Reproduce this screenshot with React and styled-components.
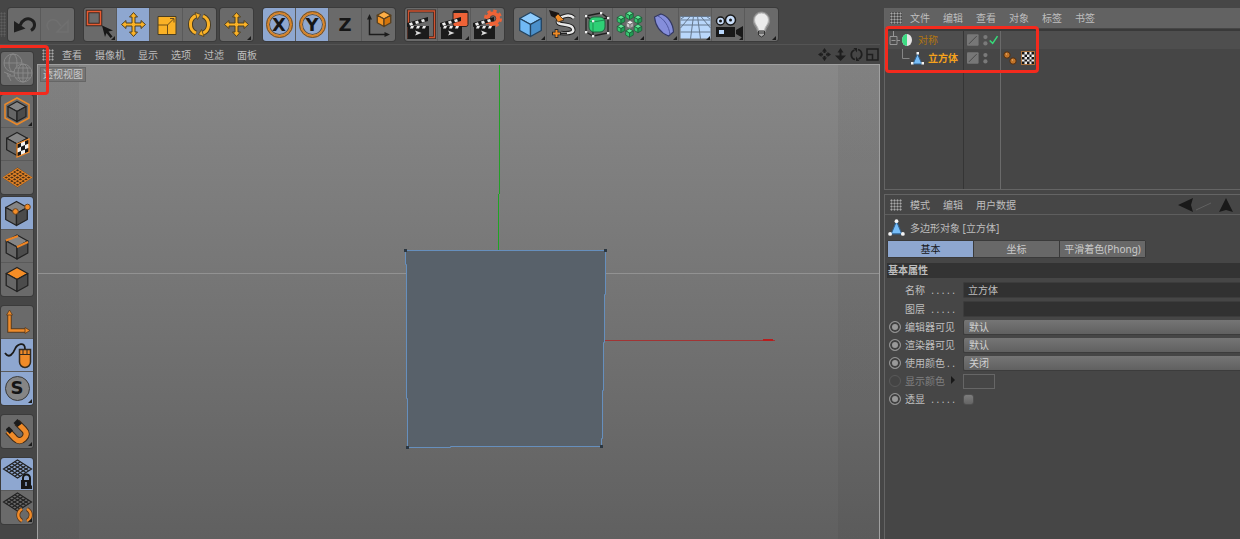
import React, { useState } from 'react';
import styled, { createGlobalStyle } from 'styled-components';

const GlobalStyle = createGlobalStyle`
  * {
    box-sizing: border-box;
  }

  body {
    margin: 0;
    background: #464646;
    color: #bebebe;
    font: 10px/14px 'Noto Sans', 'Noto Sans CJK SC', sans-serif;
  }

  button, input, select {
    font: inherit;
    color: inherit;
  }

  svg {
    display: block;
  }
`;

const Page = styled.div`
  position: relative;
  display: flex;
  gap: 4px;
  min-height: 100vh;
  background: #464646;
`;

const Main = styled.main`
  flex: 1;
  min-width: 0;
  display: flex;
  flex-direction: column;
`;

const Toolbar = styled.header`
  display: flex;
  gap: 10px;
  height: 45px;
  padding-top: 8px;
  border-bottom: 1px solid #545454;
`;

const ToolGroup = styled.div`
  display: flex;
  flex-direction: ${props => props.$vertical ? 'column' : 'row'};
  height: ${props => props.$vertical ? 'auto' : '33px'};
  margin-left: ${props => props.$close && !props.$vertical ? '-6px' : '0'};
  margin-top: ${props => props.$close && props.$vertical ? '-7px' : '0'};
  border-radius: 3px;
  overflow: hidden;
  box-shadow: 0 0 0 1px #3b3b3b;
`;

const ToolButton = styled.button`
  position: relative;
  display: flex;
  align-items: center;
  justify-content: center;
  width: ${props => props.$vertical ? '32px' : '33px'};
  height: 33px;
  padding: 0;
  border: 0;
  border-right: ${props => props.$vertical ? '0' : '1px solid #5a5a5a'};
  border-bottom: ${props => props.$vertical ? '1px solid #5a5a5a' : '0'};
  background: ${props => props.$active ? '#8ea7d0' : '#6a6a6a'};
  cursor: pointer;

  &:last-child {
    border-color: transparent;
  }

  svg {
    flex: none;
    width: 33px;
    height: 33px;
  }
`;

const Corner = styled.span`
  position: absolute;
  right: 1px;
  bottom: 1px;
  border: 2px solid transparent;
  border-right-color: #1c1c1c;
  border-bottom-color: #1c1c1c;
`;

const AxisLetter = styled.span`
  display: flex;
  align-items: center;
  justify-content: center;
  width: 27px;
  height: 27px;
  border: 3px solid ${props => props.$ring ? '#d98427' : 'transparent'};
  border-radius: 50%;
  outline: ${props => props.$ring ? '1px solid #5d5140' : 'none'};
  outline-offset: -1px;
  box-shadow: ${props => props.$ring ? 'inset 0 0 0 1px #5d5140' : 'none'};
  color: #161616;
  font: bold 18px/18px 'DejaVu Sans', sans-serif;
`;

const Workspace = styled.div`
  flex: 1;
  display: flex;
`;

const Sidebar = styled.nav`
  display: flex;
  flex-direction: column;
  gap: 10px;
  width: 37px;
  padding: 7px 4px 0 1px;
`;

const ViewColumn = styled.section`
  flex: 1;
  min-width: 0;
  display: flex;
  flex-direction: column;
`;

const MenuBar = styled.div`
  display: flex;
  align-items: center;
  gap: 13px;
  height: ${props => props.$raised ? '20px' : '19px'};
  padding: 0 8px 0 5px;
  background: ${props => props.$raised ? '#626262' : '#464646'};
`;

const MenuItem = styled.button`
  padding: 0;
  border: 0;
  background: none;
  white-space: nowrap;
  cursor: pointer;
`;

const Grip = styled.span`
  width: 12px;
  height: 12px;
  margin-right: -5px;
  background: radial-gradient(circle, #a8a8a8 30%, #2e2e2e 80%) 0 0 / 3px 3px;
`;

const ToolbarGrip = styled(Grip)`
  width: 6px;
  height: 25px;
  margin: 4px -8px 0 0;
  opacity: 0.25;
`;

const MenuTools = styled.div`
  display: flex;
  gap: 3px;
  margin-left: auto;
  margin-right: -7px;
`;

const View = styled.div`
  position: relative;
  flex: 1;
  display: flex;
  flex-direction: column;
  border: 1px solid #a0a0a0;
  border-width: 1px 1px 0 1px;
  background:
    linear-gradient(90deg, rgba(0, 0, 0, 0.05) 41px, transparent 41px calc(100% - 41px), rgba(0, 0, 0, 0.05) calc(100% - 41px)),
    linear-gradient(#888, #606060);
`;

const ViewTitle = styled.span`
  position: absolute;
  top: 2px;
  left: 2px;
  padding: 0 2px;
  border: 1px solid #666;
  background: #757575;
  color: #c8c8c8;
  line-height: 13px;
`;

const Scene = styled.svg`
  flex: 1 1 0;
  width: 100%;
  min-height: 0;
`;

const SidePanels = styled.aside`
  display: flex;
  flex-direction: column;
  width: 356px;
  padding-top: 8px;
`;

const ObjectManager = styled.section`
  display: flex;
  flex-direction: column;
  height: 182px;
  border: 1px solid #646464;
  border-width: 0 0 1px 1px;
`;

const Tree = styled.div`
  flex: 1;
  display: grid;
  grid-template-columns: 79px 37px 1fr;
  margin-top: 1px;
  border-top: 2px solid #393939;
`;

const TreeColumn = styled.div`
  border-right: 1px solid ${props => props.$light ? '#6a6a6a' : '#353535'};

  &:last-child {
    border: 0;
  }
`;

const TreeCell = styled.div`
  display: flex;
  align-items: center;
  gap: 4px;
  height: 18px;
  padding-left: ${props => props.$indent || 3}px;
  background: ${props => props.$even ? '#4e4e4e' : 'transparent'};
  color: ${props => props.$bold ? '#f5a21c' : '#b4770f'};
  font-weight: ${props => props.$bold ? 'bold' : 'normal'};
  white-space: nowrap;
`;

const AttributeManager = styled.section`
  flex: 1;
  margin-top: 4px;
  border: 1px solid #646464;
  border-width: 1px 0 0 1px;
`;

const ObjectTitle = styled.h2`
  display: flex;
  align-items: center;
  gap: 5px;
  height: 26px;
  margin: 0;
  padding-left: 3px;
  border-top: 1px solid #5e5e5e;
  font-size: 10px;
  font-weight: normal;
`;

const Tabs = styled.div`
  display: flex;
  width: 259px;
  height: 18px;
  margin-left: 2px;
  border: 1px solid #3a3a3a;
  border-radius: 2px;
`;

const Tab = styled.button`
  flex: 1;
  padding: 0;
  border: 0;
  border-right: 1px solid #3a3a3a;
  background: ${props => props.$active ? '#8ea7d0' : '#686868'};
  color: ${props => props.$active ? '#161616' : '#cacaca'};
  line-height: 16px;
  white-space: nowrap;
  cursor: pointer;

  &:last-child {
    border: 0;
  }
`;

const SectionTitle = styled.h3`
  height: 15px;
  margin: 5px 0 2px 2px;
  padding-left: 1px;
  background: #333;
  font-size: 10px;
  font-weight: bold;
  line-height: 15px;
`;

const Row = styled.div`
  display: grid;
  grid-template-columns: 12px 50px 1fr;
  column-gap: 4px;
  align-items: center;
  height: ${props => props.$tall ? '19px' : '18px'};
  padding-left: 4px;
  color: ${props => props.$off ? '#808080' : 'inherit'};
`;

const KeyDot = styled.input`
  appearance: none;
  width: 12px;
  height: 12px;
  margin: 0;
  border: 1px solid #929292;
  border-radius: 50%;
  background: ${props => props.disabled ? '#404040' : '#999'};
  box-shadow: inset 0 0 0 2px #404040;
  opacity: ${props => props.disabled ? 0.25 : 1};
`;

const Label = styled.label`
  display: flex;
  justify-content: space-between;
  white-space: nowrap;
`;

const Field = styled.div`
  display: flex;
  min-width: 0;
  padding-left: 4px;
`;

const TextInput = styled.input`
  width: 100%;
  height: 16px;
  padding: 0 4px;
  border: 1px solid #3c3c3c;
  border-right: 0;
  border-radius: 2px 0 0 2px;
  background: #313131;
`;

const Select = styled.select`
  appearance: none;
  width: 100%;
  height: 15px;
  padding: 0 5px;
  border: 1px solid #3c3c3c;
  border-width: 0 0 1px 1px;
  border-radius: 2px 0 0 2px;
  background: linear-gradient(#757575, #606060);
  color: #d2d2d2;
`;

const Swatch = styled.button`
  width: 32px;
  height: 15px;
  border: 1px solid #666;
  background: #464646;
`;

const Check = styled.input`
  appearance: none;
  width: 11px;
  height: 11px;
  margin: 0;
  border: 1px solid #505050;
  border-radius: 3px;
  background: linear-gradient(#7c7c7c, #656565);
`;

const Highlight = styled.div`
  position: absolute;
  border: 3px solid #f42a1d;
  border-radius: 4px;
  pointer-events: none;
`;

const ToolHighlight = styled(Highlight)`
  top: 45px;
  left: -3px;
  width: 52px;
  height: 50px;
`;

const TreeHighlight = styled(Highlight)`
  top: 26px;
  right: 201px;
  width: 154px;
  height: 47px;
`;

const Icon = ({ size = 33, children }) => (
  <svg width={size} height={size} viewBox={`0 0 ${size} ${size}`} fill="none" aria-hidden="true">
    {children}
  </svg>
);

function Cube({ x = 16.5, y = 16.5, r = 12, top = '#858585', left = '#666', right = '#4b4b4b', line = '#232323' }) {
  const w = r * 0.9;
  const h = r * 0.5;
  return (
    <g stroke={line} strokeWidth={r > 6 ? 1.3 : 0.7} strokeLinejoin="round">
      <path d={`M${x} ${y - r}l${w} ${h}l${-w} ${h}l${-w} ${-h}z`} fill={top} />
      <path d={`M${x - w} ${y - r + h}l${w} ${h}V${y + r}l${-w} ${-h}z`} fill={left} />
      <path d={`M${x + w} ${y - r + h}l${-w} ${h}V${y + r}l${w} ${-h}z`} fill={right} />
    </g>
  );
}

const Clapper = () => (
  <g>
    <path d="M3 20h21v11h-21z" fill="#1b1b1b" />
    <path d="M2 15l21-6v4l-21 6z" fill="#181818" />
    <path d="M4 15.2l3-.9l1 2.6l-3 .8zM10 13.500l3-.9l1 2.600l-3 .8zM16 11.800l3-.9l1 2.600l-3 .8z" fill="#eee" />
    <path d="M3 18h21v3h-21z" fill="#181818" />
    <path d="M6 18h3l-1 2.500h-3zM12 18h3l-1 2.500h-3zM18 18h3l-1 2.500h-3z" fill="#eee" />
    <path d="M10 22.500l6.500 2.500-6.500 2.500 1.500-2.500z" fill="#ddd" />
  </g>
);

const MoveIcon = () => (
  <Icon>
    <path
      d="M16.500 4.500l4 4.500h-2.500v6h6v-2.500l4.500 4-4.500 4v-2.500h-6v6h2.500l-4 4.500-4-4.500h2.500v-6h-6v2.500l-4.500-4 4.500-4v2.500h6v-6h-2.500z"
      fill="#fbb226" stroke="#4b3e23" strokeLinejoin="round"
    />
  </Icon>
);

const Mesh = ({ y = 16, color, fill = 'none' }) => (
  <g stroke={color} strokeWidth="1.2">
    <path d={`M16.500 ${y - 9}l14 9-14 9-14-9z`} fill={fill} />
    {[1, 2, 3, 4].map(n => (
      <path
        key={n}
        d={`M${16.5 - 2.8 * n} ${y - 9 + 1.8 * n}l14 9M${16.5 + 2.8 * n} ${y - 9 + 1.8 * n}l-14 9`}
      />
    ))}
  </g>
);

const UndoIcon = () => (
  <Icon>
    <path d="M12 17.500C14 12 19 9.500 23 11.500C28 14 27.500 20 23 22.500" stroke="#1f1f1f" strokeWidth="3" />
    <path d="M6 13v11.500l11.500-4z" fill="#1f1f1f" />
  </Icon>
);

const RedoIcon = () => (
  <Icon>
    <path d="M8 22C3 16 9 9 16 13l4 5M27 13v11H16z" stroke="#707070" strokeWidth="1.500" />
  </Icon>
);

const SelectIcon = () => (
  <Icon>
    <path d="M3.500 3.500h13v13h-13z" fill="#6c6c6c" stroke="#3a2a25" strokeWidth="3.500" />
    <path d="M3.500 3.500h13v13h-13z" stroke="#e85b31" strokeWidth="1.500" />
    <path d="M18 17.500l11 5-4.500 1 4 5-2 1.500-4-5-1.500 4z" fill="#171717" />
  </Icon>
);

const ScaleIcon = () => (
  <Icon>
    <path d="M8 8.500h18v18h-18z" fill="#fbb226" stroke="#4b3e23" />
    <path d="M8 17h9.500v9.500M17.500 17l6-6M20 10.500h4v4" stroke="#5d4315" strokeWidth="0.900" />
  </Icon>
);

const RotateIcon = () => (
  <Icon>
    {['#4b3e23', '#fbb226'].map((color, i) => (
      <g key={color} stroke={color} strokeWidth={i ? 3 : 5}>
        <path d="M13 25A9.500 9.500 0 0 1 13.500 7.500" />
        <path d="M20 8A9.500 9.500 0 0 1 19.500 25.500" />
      </g>
    ))}
    <path d="M12 4.500l5.500 2-3 5zM21 28.500l-5.500-2 3-5z" fill="#fbb226" stroke="#4b3e23" strokeWidth="0.800" />
  </Icon>
);

const CoordIcon = () => (
  <Icon>
    <path d="M7.500 10v16.500h16" stroke="#1c1c1c" strokeWidth="1.500" />
    <path d="M7.500 6l2.500 5.500h-5zM28 26.500l-5.500-2.500v5z" fill="#1c1c1c" />
    <Cube x={22} y={11} r={7.5} top="#ffae45" left="#f49422" right="#d3740c" line="#59401f" />
  </Icon>
);

const RenderViewIcon = () => (
  <Icon>
    <path d="M3.500 3h26v26.500h-26z" stroke="#3a2a25" strokeWidth="3" />
    <path d="M3.500 3h26v26.500h-26z" stroke="#d2532f" strokeWidth="1.300" />
    <Clapper />
  </Icon>
);

const RenderPictureIcon = () => (
  <Icon>
    <rect x="15" y="2.500" width="15" height="16" rx="2" fill="#ef6337" stroke="#292220" />
    <path d="M15 5V3h15v2z" fill="#222" />
    <Clapper />
  </Icon>
);

const RenderSettingsIcon = () => (
  <Icon>
    <circle cx="22" cy="10.500" r="7.500" stroke="#ef6337" strokeWidth="3" strokeDasharray="3.300 2.590" />
    <circle cx="22" cy="10.500" r="5" stroke="#ef6337" strokeWidth="4" />
    <circle cx="22" cy="10.500" r="2.800" fill="#696969" stroke="#4a302a" strokeWidth="0.700" />
    <Clapper />
  </Icon>
);

const SplineIcon = () => (
  <Icon>
    {['#222', '#e8e8e8'].map((color, i) => (
      <path
        key={color}
        d="M27 10C22 5 12 9 11 13C10 18 20 15 25 19C29 24 24 26 14 25"
        stroke={color} strokeWidth={i ? 2.5 : 4.5}
      />
    ))}
    <path d="M2 2l10 3 2 8-4-2-6-3z" fill="#191514" />
    <path d="M8 9l3-3 6 6-6 2z" fill="#ee8b28" stroke="#33261b" strokeWidth="0.700" />
    <path d="M9.500 21v9M5 25.500h9" stroke="#222" strokeWidth="3.600" />
    <path d="M9.500 22v7M6 25.500h7" stroke="#f28b26" strokeWidth="2" />
    <path d="M14 25.500h6" stroke="#222" strokeWidth="2" />
  </Icon>
);

const SubdivisionIcon = () => (
  <Icon>
    <path d="M6 8l15-3 7 5-15 3zM6 8v16l7 4V13M13 28l15-3V10" stroke="#202020" strokeWidth="1.300" />
    <rect x="9" y="9" width="16" height="15" rx="5" fill="#2fd076" stroke="#205e3d" />
    <path d="M9 13l4 1v10M13 14l12-2" stroke="#1d8f51" />
    {[[6, 8], [21, 5], [28, 10], [13, 13], [6, 24], [13, 28], [28, 25]].map(([x, y]) => (
      <rect key={`${x}-${y}`} x={x - 1} y={y - 1} width="2.300" height="2.300" fill="#eee" />
    ))}
  </Icon>
);

const ArrayIcon = () => (
  <Icon>
    {[[16.500, 7.500], [25, 11.500], [25, 20.500], [16.500, 25], [8, 20.500], [8, 11.500]].map(([x, y]) => (
      <Cube key={`${x}-${y}`} x={x} y={y} r={4.200} top="#5ee895" left="#35c871" right="#209c54" line="#1b5735" />
    ))}
    <Cube x={17} y={16.500} r={4} top="#f2f2f2" left="#ccc" right="#aaa" line="#666" />
  </Icon>
);

const DeformerIcon = () => (
  <Icon>
    <path d="M8.500 9l6.500-3C22 8 27 15 27.500 24l-5 4C15 25 9.500 19 8.500 9z" fill="#858edb" stroke="#343963" strokeWidth="1.200" />
    <path d="M12 8C18 11 23 18 24 26.500" stroke="#5059a0" />
  </Icon>
);

const FloorIcon = () => (
  <Icon>
    <path d="M1.500 8.500h30v22h-30z" fill="#b9d7fb" />
    <path d="M1.500 8.500h30M1.500 12h30M1.500 17h30M1.500 24h30M11.500 8l-10 12M14.500 8l-3 23M18.500 8l3 23M21.500 8l10 12M6 8l-4 3M27 8l4 3" stroke="#66788d" />
  </Icon>
);

const CameraIcon = () => (
  <Icon>
    <path d="M4 19h19v10H4zM24 22l7-4v12l-7-4z" fill="#191919" />
    <path d="M7 22h5v4H7z" fill="#b9d7fb" />
    {[[8.500, 13, 4], [18.500, 12, 5]].map(([x, y, r]) => (
      <g key={x}>
        <circle cx={x} cy={y} r={r} fill="#c9defa" stroke="#191919" strokeWidth="1.500" />
        <circle cx={x} cy={y} r="1.500" fill="#191919" />
      </g>
    ))}
  </Icon>
);

const LightIcon = () => (
  <Icon>
    <path d="M8 12a8.500 8.500 0 0 1 17 0c1 5-4 8-4 12h-9c0-4-5-7-4-12z" fill="#8c8c8c" />
    <path d="M9.500 12a7 7 0 0 1 14 0c0 5-4 6-4 11h-6c0-5-4-6-4-11z" fill="#ececec" stroke="#bbb" />
    <path d="M13.500 23h6v4l-3 2-3-2z" fill="#aaa" stroke="#343434" />
    <path d="M13.500 25h6" stroke="#343434" />
  </Icon>
);

const EditableIcon = () => (
  <Icon>
    <g stroke="#8b8b8b" strokeWidth="0.900">
      <circle cx="12" cy="11" r="9" />
      <ellipse cx="12" cy="11" rx="4" ry="9" />
      <path d="M3 11h18M6 21l4 8M3 20l7 3M6 24h7" />
      <circle cx="22" cy="21" r="9" fill="#6a6a6a" />
      <ellipse cx="22" cy="21" rx="5" ry="9" />
      <path d="M13 21h18M15 16h14M15 26h14M22 12v18" />
    </g>
  </Icon>
);

const ModelIcon = () => (
  <Icon>
    <path d="M16 3l12 6.500v13.500l-12 6.500-12-6.500V9.500z" stroke="#e8882a" strokeWidth="1.600" />
    <Cube x={16} y={16.500} r={10} />
  </Icon>
);

const TextureIcon = () => (
  <Icon>
    <Cube x={16} y={16} r={11.500} />
    <path d="M16 16l12-5v13l-12 5z" fill="#f2f2f2" />
    <path
      d="M16 16l4-1.700v4.400l-4 1.700zM24 12.700l4-1.700v4.400l-4 1.600zM20 18.700l4-1.700v4.400l-4 1.600zM16 24.700l4-1.700v4.300l-4 1.700zM24 21.300l4-1.600v4.300l-4 1.600z"
      fill="#171717"
    />
    <path d="M16 16l12-5v13l-12 5z" stroke="#ee8a2a" strokeWidth="1.300" />
  </Icon>
);

const WorkplaneIcon = () => (
  <Icon>
    <path d="M16.500 6.500l15 10-15 10-15-10z" fill="#3f2a14" />
    <Mesh y={16.5} color="#dd8027" fill="#4a2f14" />
  </Icon>
);

const PointsIcon = () => (
  <Icon>
    <Cube x={15.5} />
    <circle cx="14.500" cy="14.500" r="2.800" fill="#f58d26" stroke="#6b4522" />
    <circle cx="26.500" cy="10" r="2.800" fill="#f58d26" stroke="#6b4522" />
  </Icon>
);

const EdgesIcon = () => (
  <Icon>
    <Cube x={16} y={17} />
    <path d="M5 10.500l12-4.500M16 17l11-5" stroke="#ee8525" strokeWidth="2" />
  </Icon>
);

const PolygonsIcon = () => (
  <Icon>
    <Cube x={16} y={16.500} top="#f58d26" />
  </Icon>
);

const AxisIcon = () => (
  <Icon>
    {['#5a3b1d', '#ef8c2b'].map((color, i) => (
      <path key={color} d="M8.500 8v16.500h16" stroke={color} strokeWidth={i ? 2.5 : 4.5} />
    ))}
    <path d="M8.500 4l3 5h-6zM29 24.500l-5-3v6z" fill="#ef8c2b" stroke="#5a3b1d" strokeWidth="0.800" />
  </Icon>
);

const MouseIcon = () => (
  <Icon>
    <path d="M4 14C8 20 12 15 14 10C16 5 24 2 24 10" stroke="#1b1b1b" strokeWidth="1.800" />
    <path d="M18.500 10.500h11V23a5.500 5.500 0 0 1-11 0z" fill="#f08b29" stroke="#342b20" strokeWidth="1.500" />
    <path d="M18.500 15.500h11M22 10.500v5M26 10.500v5" stroke="#342b20" />
  </Icon>
);

const SnapLetter = styled.span`
  display: flex;
  align-items: center;
  justify-content: center;
  width: 25px;
  height: 25px;
  border: 1px solid #3a3a3a;
  border-radius: 50%;
  background: #858585;
  color: #151515;
  font: bold 18px/18px 'DejaVu Sans', sans-serif;
`;

const MagnetIcon = () => (
  <Icon>
    {['#3c2a19', '#f08b29'].map((color, i) => (
      <path
        key={color}
        d="M7 16l7 7.500c3 3 6 3 9 0s3-6 0-9l-7-7"
        stroke={color} strokeWidth={i ? 5 : 7}
      />
    ))}
    <path d="M8.800 19l-3.800-4 0-1 3-2.500 4 4zM16.500 12l-4-4 4-4 4.500 4.500z" fill="#1b1b1b" />
  </Icon>
);

const LockGridIcon = () => (
  <Icon>
    <Mesh y={11} color="#232323" />
    <path d="M22 23v-3a3.500 3.500 0 0 1 7 0v3" stroke="#161616" strokeWidth="2" />
    <path d="M20 22h10v9H20z" fill="#161616" />
    <path d="M25 24v4" stroke="#8ea7d0" strokeWidth="1.500" />
  </Icon>
);

const RotateGridIcon = () => (
  <Icon>
    <Mesh y={11} color="#232323" />
    <path d="M21 18c-5 3-5 9 0 12M26 18c5 3 5 9 0 12" stroke="#5c391c" strokeWidth="4" />
    <path d="M21 18c-5 3-5 9 0 12M26 18c5 3 5 9 0 12" stroke="#f08b29" strokeWidth="2.400" />
  </Icon>
);

const PolygonObjectIcon = ({ size = 14 }) => (
  <svg width={size} height={size} viewBox="0 0 16 16" aria-hidden="true">
    <path d="M8 2l5 12H3z" fill="#76bdf8" stroke="#326290" />
    <g fill="#f4f4f4">
      <circle cx="8" cy="2" r="1.800" />
      <circle cx="2" cy="14" r="1.800" />
      <circle cx="14" cy="14" r="1.800" />
    </g>
  </svg>
);

const LayerIcon = () => (
  <Icon size={12}>
    <rect width="12" height="12" rx="1" fill="#777" />
    <path d="M2 10l8-8" stroke="#484848" />
  </Icon>
);

const VisibilityDots = ({ enabled }) => (
  <svg width="18" height="14" viewBox="0 0 18 14" fill="none" aria-hidden="true">
    <circle cx="2.500" cy="4" r="2.200" fill="#7a7a7a" />
    <circle cx="2.500" cy="10.500" r="2.200" fill="#7a7a7a" />
    {enabled && <path d="M7 7.500l3 3 5-7.500" stroke="#37d979" strokeWidth="1.600" />}
  </svg>
);

const toolGroups = [
  [{ name: '撤销', icon: <UndoIcon /> }, { name: '重做', icon: <RedoIcon /> }],
  [
    { name: '选择', icon: <SelectIcon />, more: true },
    { name: '移动', icon: <MoveIcon />, active: true },
    { name: '缩放', icon: <ScaleIcon /> },
    { name: '旋转', icon: <RotateIcon /> },
  ],
  [{ name: '最近使用', icon: <MoveIcon />, more: true }],
  [
    { name: 'X', icon: <AxisLetter $ring>X</AxisLetter>, active: true },
    { name: 'Y', icon: <AxisLetter $ring>Y</AxisLetter>, active: true },
    { name: 'Z', icon: <AxisLetter>Z</AxisLetter> },
    { name: '坐标系统', icon: <CoordIcon /> },
  ],
  [
    { name: '渲染活动视图', icon: <RenderViewIcon /> },
    { name: '渲染到图片', icon: <RenderPictureIcon />, more: true },
    { name: '渲染设置', icon: <RenderSettingsIcon /> },
  ],
  [
    { name: '立方体对象', icon: <Icon><Cube top="#8fcdff" left="#70b9f5" right="#4a8fca" line="#24435f" /></Icon>, more: true },
    { name: '样条', icon: <SplineIcon />, more: true },
    { name: '细分曲面', icon: <SubdivisionIcon />, more: true },
    { name: '阵列', icon: <ArrayIcon />, more: true },
    { name: '变形器', icon: <DeformerIcon />, more: true },
    { name: '地面', icon: <FloorIcon />, more: true },
    { name: '摄像机对象', icon: <CameraIcon />, more: true },
    { name: '灯光', icon: <LightIcon />, more: true },
  ],
];

const modeGroups = [
  [{ name: '转为可编辑对象', icon: <EditableIcon /> }],
  [
    { name: '模型', icon: <ModelIcon />, more: true },
    { name: '纹理', icon: <TextureIcon /> },
    { name: '工作平面', icon: <WorkplaneIcon /> },
  ],
  [
    { name: '点', icon: <PointsIcon />, active: true },
    { name: '边', icon: <EdgesIcon /> },
    { name: '多边形', icon: <PolygonsIcon /> },
  ],
  [
    { name: '启用轴心', icon: <AxisIcon /> },
    { name: '微调', icon: <MouseIcon />, active: true },
    { name: '视窗独显', icon: <SnapLetter>S</SnapLetter>, active: true, more: true },
  ],
  [{ name: '捕捉', icon: <MagnetIcon />, more: true }],
  [
    { name: '锁定工作平面', icon: <LockGridIcon />, active: true, more: true },
    { name: '旋转工作平面', icon: <RotateGridIcon />, more: true },
  ],
];

const viewMenu = ['查看', '摄像机', '显示', '选项', '过滤', '面板'];
const objectMenu = ['文件', '编辑', '查看', '对象', '标签', '书签'];
const attributeMenu = ['模式', '编辑', '用户数据'];
const tabs = ['基本', '坐标', '平滑着色(Phong)'];

const selects = [
  { id: 'editor', label: '编辑器可见', options: ['默认', '开启', '关闭'] },
  { id: 'render', label: '渲染器可见', options: ['默认', '开启', '关闭'] },
  { id: 'color', label: '使用颜色', dots: '. .', options: ['关闭', '自动', '开启'] },
];

function Tools({ groups, vertical, closeAt }) {
  return groups.map((group, index) => (
    <ToolGroup key={index} $vertical={vertical} $close={index === closeAt}>
      {group.map(tool => (
        <ToolButton key={tool.name} $active={tool.active} $vertical={vertical} aria-label={tool.name}>
          {tool.icon}
          {tool.more && <Corner />}
        </ToolButton>
      ))}
    </ToolGroup>
  ));
}

function Menu({ items }) {
  return (
    <>
      <Grip />
      {items.map(item => <MenuItem key={item}>{item}</MenuItem>)}
    </>
  );
}

function Viewport() {
  return (
    <ViewColumn>
      <MenuBar>
        <Menu items={viewMenu} />
        <MenuTools>
          <Icon size={13}>
            <path d="M6.500 0l2.500 3.500h-1.500v1.500h-2v-1.500h-1.500zM6.500 13l2.500-3.500h-1.500v-1.500h-2v1.500h-1.500zM0 6.500l3.500-2.500v1.500h1.500v2h-1.500v1.500zM13 6.500l-3.500-2.500v1.500h-1.500v2h1.500v1.500z" fill="#1f1f1f" />
          </Icon>
          <Icon size={13}>
            <path d="M6.500 0l3 4.500h-2v3H12l-5.500 5.500L1 7.500h4.500v-3h-2z" fill="#1f1f1f" />
          </Icon>
          <Icon size={13}>
            <path d="M5 11.500A5 5 0 0 1 4.500 2M8 1.500a5 5 0 0 1 0.500 9.500" stroke="#1f1f1f" strokeWidth="1.800" />
            <path d="M3.500 0h3.500v4.500zM9.500 13h-3.500v-4.500z" fill="#1f1f1f" />
          </Icon>
          <Icon size={13}>
            <path d="M1 1h11v11H1zM1 6.500h5.500V12" stroke="#1f1f1f" strokeWidth="1.500" />
          </Icon>
        </MenuTools>
      </MenuBar>
      <View>
        <Scene viewBox="0 0 841 474" preserveAspectRatio="xMidYMid slice" fill="none">
          <path d="M0 208.500h841" stroke="#929292" />
          <path d="M461.500 0v129" stroke="#22a026" />
          <path d="M460.500 129v57" stroke="#1fa423" />
          <path d="M567 275.500h170" stroke="#a13434" />
          <path d="M725 275h10" stroke="#b91d1d" strokeWidth="2" />
          <path
            d="M367.500 185.500h200v44h-1v48h-1v48h-1v48h-1v8h-151v1h-43v-49h-1v-134h-1z"
            fill="#58616a" stroke="#668fbd"
          />
          <path d="M366 184h3v3h-3zM566 184h3v3h-3zM562 380h3v3h-3zM368 381h3v3h-3z" fill="#2b3742" />
        </Scene>
        <ViewTitle>透视视图</ViewTitle>
      </View>
    </ViewColumn>
  );
}

function ObjectTree() {
  return (
    <Tree>
      <TreeColumn>
        <TreeCell $even>
          <svg width="26" height="18" viewBox="0 0 26 18" fill="none" aria-hidden="true">
            <path d="M5.500 0v5M2 5.500h7v8H2zM3.500 9.500h4M9 9.500h3" stroke="#969696" />
            <ellipse cx="19" cy="9" rx="5" ry="6" fill="#e4e4e4" />
            <path d="M19 3a5 6 0 0 0 0 12z" fill="#3ddc83" />
          </svg>
          对称
        </TreeCell>
        <TreeCell $bold>
          <svg width="36" height="18" viewBox="0 0 36 18" fill="none" aria-hidden="true">
            <path d="M14.500 0v9.500h7" stroke="#858585" />
            <path d="M29.500 5l4.500 10h-9z" fill="#76bdf8" stroke="#326290" />
            <path d="M28.500 3h2.500v2.500h-2.500zM23 13h2.500v2.500H23zM33.500 13H36v2.500h-2.500z" fill="#f4f4f4" />
          </svg>
          立方体
        </TreeCell>
      </TreeColumn>
      <TreeColumn $light>
        <TreeCell $even><LayerIcon /><VisibilityDots enabled /></TreeCell>
        <TreeCell><LayerIcon /><VisibilityDots /></TreeCell>
      </TreeColumn>
      <TreeColumn>
        <TreeCell $even />
        <TreeCell $indent={2}>
          <Icon size={14}>
            <circle cx="4" cy="4" r="3.200" fill="#c27428" stroke="#4a2d15" />
            <circle cx="10" cy="10" r="3.200" fill="#c27428" stroke="#4a2d15" />
            <path d="M3 3h1M9 9h1" stroke="#eec08c" />
          </Icon>
          <Icon size={14}>
            <rect x="0.500" y="0.500" width="13" height="13" fill="#eee" stroke="#a8713b" />
            <path d="M1 1h2.500v2.500h-2.500zM6 1h2.500v2.500H6zM10.500 1H13v2.500h-2.500zM3.500 3.500H6V6H3.500zM8.500 3.500h2V6h-2zM1 6h2.500v2.500H1zM6 6h2.500v2.500H6zM10.500 6H13v2.500h-2.500zM3.500 8.500H6v2H3.500zM8.500 8.500h2v2h-2zM1 10.500h2.500V13H1zM6 10.500h2.500V13H6zM10.500 10.500H13V13h-2.500z" fill="#161616" />
          </Icon>
        </TreeCell>
      </TreeColumn>
    </Tree>
  );
}

function Attributes() {
  const [tab, setTab] = useState('基本');

  return (
    <AttributeManager>
      <MenuBar>
        <Menu items={attributeMenu} />
        <MenuTools>
          <svg width="61" height="16" viewBox="0 0 61 16" fill="none" aria-hidden="true">
            <path d="M0 8l15-7-2 7 2 7z" fill="#191919" />
            <path d="M18 13l15-7" stroke="#616161" />
            <path d="M48 1l7 14-7-2-7 2z" fill="#191919" />
          </svg>
        </MenuTools>
      </MenuBar>
      <ObjectTitle>
        <PolygonObjectIcon size={17} />
        多边形对象 [立方体]
      </ObjectTitle>
      <Tabs>
        {tabs.map(name => (
          <Tab key={name} $active={name === tab} onClick={() => setTab(name)}>{name}</Tab>
        ))}
      </Tabs>
      <SectionTitle>基本属性</SectionTitle>
      <Row $tall>
        <span />
        <Label htmlFor="name">名称<span>. . . . .</span></Label>
        <Field><TextInput id="name" defaultValue="立方体" /></Field>
      </Row>
      <Row $tall>
        <span />
        <Label htmlFor="layer">图层<span>. . . . .</span></Label>
        <Field><TextInput id="layer" /></Field>
      </Row>
      {selects.map(({ id, label, dots, options }) => (
        <Row key={id}>
          <KeyDot type="radio" name={`${id}-key`} aria-label={label} />
          <Label htmlFor={id}>{label}{dots && <span>{dots}</span>}</Label>
          <Field>
            <Select id={id}>
              {options.map(option => <option key={option}>{option}</option>)}
            </Select>
          </Field>
        </Row>
      ))}
      <Row $off>
        <KeyDot type="radio" disabled aria-label="显示颜色" />
        <Label htmlFor="swatch">
          显示颜色
          <svg width="4" height="12" viewBox="0 0 4 12" aria-hidden="true">
            <path d="M0 2l4 4-4 4z" fill="#191919" />
          </svg>
        </Label>
        <Field><Swatch id="swatch" disabled /></Field>
      </Row>
      <Row>
        <KeyDot type="radio" name="xray-key" aria-label="透显" />
        <Label htmlFor="xray">透显<span>. . . . .</span></Label>
        <Field><Check id="xray" type="checkbox" /></Field>
      </Row>
    </AttributeManager>
  );
}

function App() {
  return (
    <>
      <GlobalStyle />
      <Page>
        <Main>
          <Toolbar>
            <ToolbarGrip />
            <Tools groups={toolGroups} closeAt={2} />
          </Toolbar>
          <Workspace>
            <Sidebar>
              <Tools groups={modeGroups} vertical closeAt={2} />
            </Sidebar>
            <Viewport />
          </Workspace>
        </Main>
        <SidePanels>
          <ObjectManager>
            <MenuBar $raised>
              <Menu items={objectMenu} />
            </MenuBar>
            <ObjectTree />
          </ObjectManager>
          <Attributes />
        </SidePanels>
        <ToolHighlight />
        <TreeHighlight />
      </Page>
    </>
  );
}

export default App;
